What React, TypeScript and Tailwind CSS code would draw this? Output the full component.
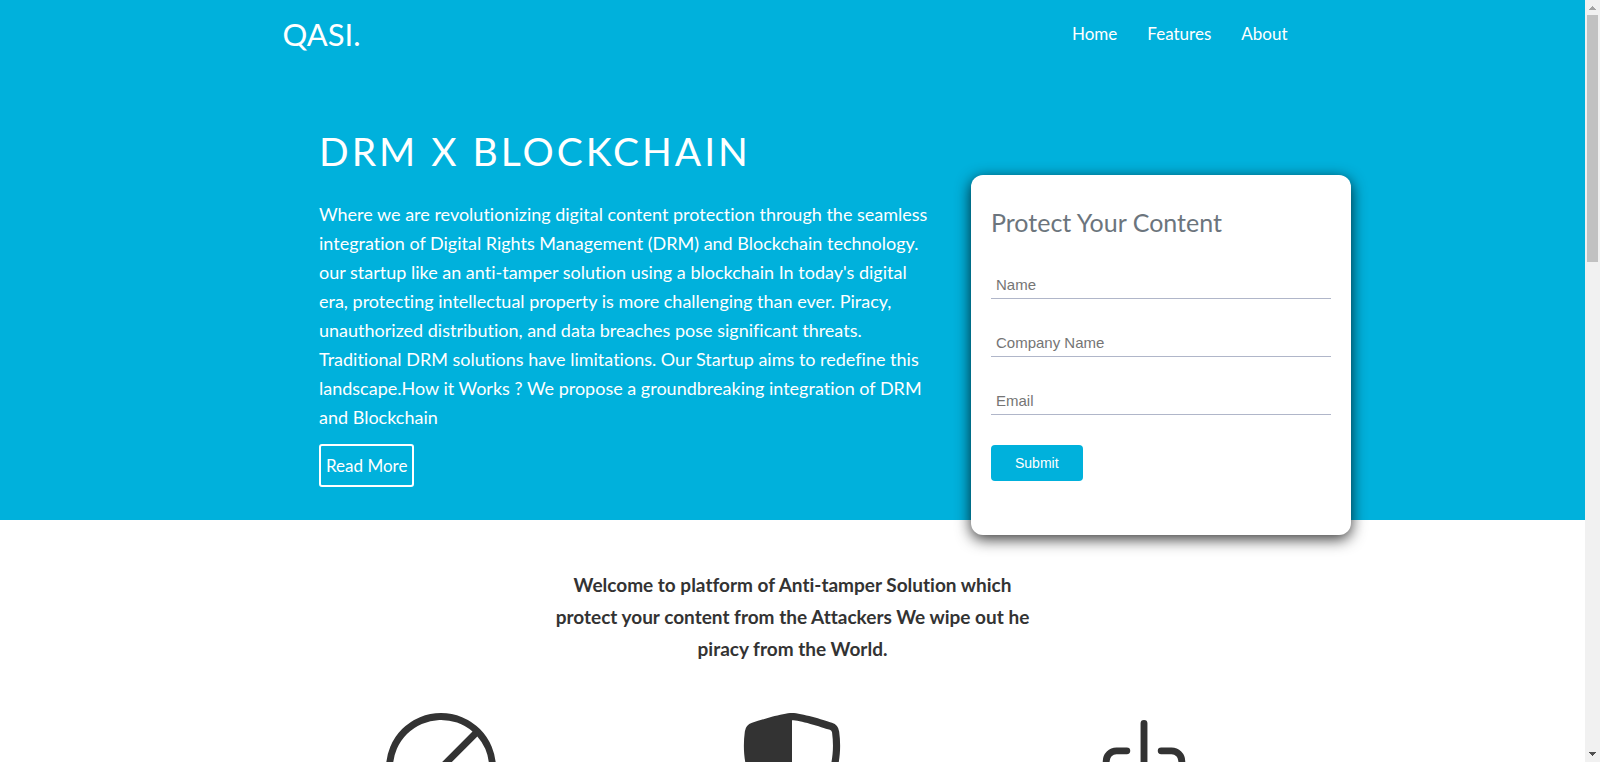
import { BsBan, BsShieldShaded } from "react-icons/bs";

const links = ["Home", "Features", "About"];

const fields = [
  { id: "name", label: "Name", type: "text" },
  { id: "company", label: "Company Name", type: "text" },
  { id: "email", label: "Email", type: "email" },
];

const intro = [
  "Where we are revolutionizing digital content protection through the seamless",
  "integration of Digital Rights Management (DRM) and Blockchain technology.",
  "our startup like an anti-tamper solution using a blockchain In today's digital",
  "era, protecting intellectual property is more challenging than ever. Piracy,",
  "unauthorized distribution, and data breaches pose significant threats.",
  "Traditional DRM solutions have limitations. Our Startup aims to redefine this",
  "landscape.How it Works ? We propose a groundbreaking integration of DRM",
  "and Blockchain",
];

const welcome = [
  "Welcome to platform of Anti-tamper Solution which",
  "protect your content from the Attackers We wipe out he",
  "piracy from the World.",
];

function BoxArrowIcon() {
  return (
    <svg
      viewBox="0 0 16 16"
      className="size-[110px]"
      fill="none"
      stroke="currentColor"
      strokeLinecap="round"
      strokeLinejoin="round"
      aria-hidden="true"
    >
      <path d="M8 1.5v10M5.5 9l2.5 2.5L10.500 9" />
      <path d="M5.5 5.5H4A1.5 1.5 0 0 0 2.5 7v6A1.5 1.5 0 0 0 4 14.5h8a1.5 1.5 0 0 0 1.5-1.5V7A1.5 1.5 0 0 0 12 5.5h-1.5" />
    </svg>
  );
}

function ScrollTrack() {
  return (
    <div className="flex w-[15px] shrink-0 flex-col items-center bg-[#f1f1f1]" aria-hidden="true">
      <svg viewBox="0 0 15 15" className="size-[15px]" shapeRendering="crispEdges">
        <path d="M7 6h1v1h1v1h1v1h1v1H4V9h1V8h1V7h1z" fill="#a3a3a3" />
      </svg>
      <div className="h-[247px] w-[11px] bg-[#c1c1c1]" />
      <svg viewBox="0 0 15 15" className="mt-auto size-[15px]" shapeRendering="crispEdges">
        <path d="M4 5h7v1h-1v1H9v1H8v1H7V8H6V7H5V6H4z" fill="#505050" />
      </svg>
    </div>
  );
}

function Lines({ lines }: { lines: string[] }) {
  return (
    <>
      {lines.map((line) => (
        <span key={line} className="block whitespace-nowrap">
          {line}{" "}
        </span>
      ))}
    </>
  );
}

export default function App() {
  return (
    <div className="flex h-screen overflow-hidden bg-white font-['Lato','Open_Sans',sans-serif] [font-variant-ligatures:none]">
      <div className="min-w-0 flex-1 overflow-hidden">
        <header className="bg-[#00b1dc] pb-[33px] text-white">
          <nav className="mx-auto flex h-[68px] max-w-[1020px] items-center justify-between">
            <a href="#" className="text-[31px] leading-[40px]">
              QASI.
            </a>
            <ul className="flex">
              {links.map((link) => (
                <li key={link}>
                  <a href="#" className="px-[15px] text-[17px] leading-6">
                    {link}
                  </a>
                </li>
              ))}
            </ul>
          </nav>

          <div className="mx-auto flex max-w-[1117px] justify-between pl-[85px]">
            <section className="pt-[59px]">
              <h1 className="text-[39px] leading-[48px] tracking-[3px]">DRM X BLOCKCHAIN</h1>
              <p className="mt-[25px] text-[18px] leading-[29px]">
                <Lines lines={intro} />
              </p>
              <a
                href="#"
                className="mt-[12px] inline-block rounded-[3px] border-2 border-white px-[5px] py-2 text-[17px] leading-[23px]"
              >
                Read More
              </a>
            </section>

            <form
              className="mt-[107px] mb-[-48px] h-[360px] w-[380px] shrink-0 rounded-[12px] bg-white px-5 pt-8 shadow-[0_4px_15px_rgba(0,0,0,0.8)]"
              onSubmit={(event) => event.preventDefault()}
            >
              <h2 className="text-[25px] leading-[30px] text-[#6c757d]">Protect Your Content</h2>
              <div className="mt-9 flex flex-col gap-[32px] font-['Liberation_Sans',Arial,sans-serif]">
                {fields.map((field) => (
                  <input
                    key={field.id}
                    id={field.id}
                    type={field.type}
                    aria-label={field.label}
                    placeholder={field.label}
                    className="h-[26px] w-full border-b border-[#b0b6c9] px-[5px] pb-[2px] text-[15px] text-[#333333] outline-none placeholder:text-[#757575]"
                  />
                ))}
              </div>
              <button
                type="submit"
                className="mt-[30px] h-9 rounded-[4px] bg-[#00b1dc] px-6 font-['Liberation_Sans',Arial,sans-serif] text-[14px] text-white"
              >
                Submit
              </button>
            </form>
          </div>
        </header>

        <main className="pt-[49px] text-[#333333]">
          <p className="text-center text-[19px] leading-[32px] font-bold">
            <Lines lines={welcome} />
          </p>
          <div className="mx-auto mt-[48px] grid max-w-[1055px] grid-cols-3 justify-items-center">
            <BsBan className="size-[110px]" />
            <BsShieldShaded className="size-[110px]" />
            <BoxArrowIcon />
          </div>
        </main>
      </div>
      <ScrollTrack />
    </div>
  );
}
